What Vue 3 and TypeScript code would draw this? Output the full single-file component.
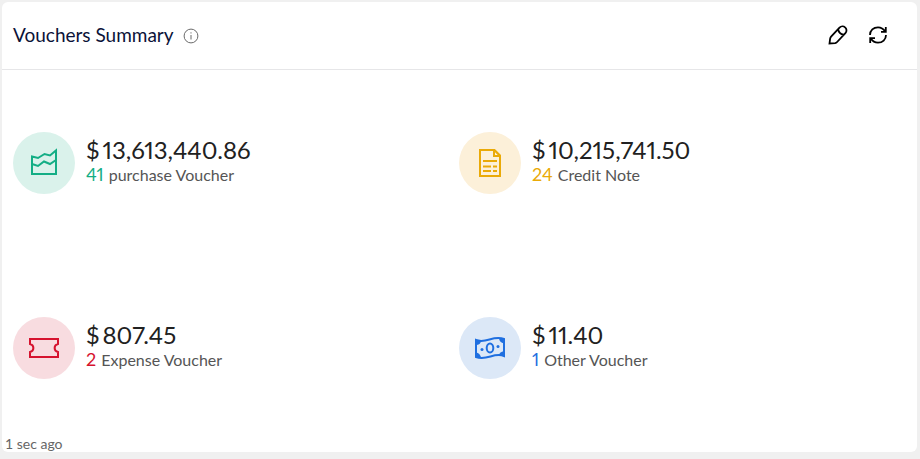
<script setup lang="ts">
import { ref } from 'vue'

type Kind = 'purchase' | 'credit' | 'expense' | 'other'

interface VoucherStat {
  kind: Kind
  amount: string
  count: number
  label: string
}

const stats = ref<VoucherStat[]>([
  { kind: 'purchase', amount: '13,613,440.86', count: 41, label: 'purchase Voucher' },
  { kind: 'credit', amount: '10,215,741.50', count: 24, label: 'Credit Note' },
  { kind: 'expense', amount: '807.45', count: 2, label: 'Expense Voucher' },
  { kind: 'other', amount: '11.40', count: 1, label: 'Other Voucher' },
])
</script>

<template>
  <section class="card">
    <header class="head">
      <h2 class="title">Vouchers Summary</h2>
      <svg class="info" viewBox="0 0 16 16" aria-hidden="true">
        <circle cx="8" cy="8" r="6.9" />
        <path d="M8 7v4.5M8 4.3v1.2" />
      </svg>
      <div class="actions">
        <button type="button" class="action" aria-label="Edit">
          <svg viewBox="0 0 20 20" aria-hidden="true">
            <path d="M1.500 18.500 2.100 13.800Q2.300 12.600 3.100 11.700L11.500 2.700C13.200 .9 15.600 1 17.100 2.400C18.800 3.900 19 6.400 17.400 8.100L9.100 17Q8.300 17.900 7.100 18.100ZM10.200 4.200C10.500 7.100 12.700 9.300 15.800 9.700" />
          </svg>
        </button>
        <button type="button" class="action" aria-label="Refresh">
          <svg viewBox="0 0 20 20" aria-hidden="true">
            <path d="M2 10C2 5.500 5.500 2.300 10 2.300C13 2.300 15.500 3.800 17 6.500M17.800 2V6.800H13M18 10C18 14.500 14.500 17.700 10 17.700C7 17.700 4.500 16.200 3 13.500M2.200 18V13.200H7" />
          </svg>
        </button>
      </div>
    </header>

    <div class="grid">
      <article v-for="item in stats" :key="item.kind" class="stat" :class="item.kind">
        <div class="badge">
          <svg viewBox="0 0 32 32" aria-hidden="true">
            <path v-if="item.kind === 'purchase'" d="M4 9.500 10 11 16.500 7 22 8.500 28 3.500V27H4ZM4 17 10 19 16 14.500 22 17 28 13" />
            <template v-else-if="item.kind === 'credit'">
              <path d="M6 3H20.500L26 8.500V29H6Z" />
              <path class="solid" d="M19 3H21L26 8V10H19ZM21 5V8H24Z" fill-rule="evenodd" />
              <path d="M9 14H23M9 19.500H17M19 19.500H23M9 24H17M19 24H23" />
            </template>
            <path v-else-if="item.kind === 'expense'" d="M2 7H30V12C25.500 13 25.500 19 30 20V25H2V20C6.500 19 6.500 13 2 12Z" />
            <template v-else>
              <path d="M2 8C12 12 19 3 30 7V24C20 20 13 29 2 25Z" />
              <ellipse cx="16" cy="16" rx="3.300" ry="4.500" />
              <path class="solid" d="M2 8L7 9Q6.500 13 2 13ZM30 7 25 6.500Q25.500 10.500 30 11.500ZM2 25V20.500Q6 21 7 25.500ZM30 24V19Q25.500 20 25 23Z" />
              <circle class="solid" cx="8" cy="17.500" r="1.500" />
              <circle class="solid" cx="24" cy="14.500" r="1.500" />
            </template>
          </svg>
        </div>
        <div class="text">
          <div class="amount"><span>$</span><span>{{ item.amount }}</span></div>
          <div class="line"><span class="count">{{ item.count }}</span><span>{{ item.label }}</span></div>
        </div>
      </article>
    </div>

    <footer class="updated">1 sec ago</footer>
  </section>
</template>

<style>
body {
  background: #f0f0f0;
}
</style>

<style scoped>
.card {
  margin: 2px 3px 0 2px;
  background: #fff;
  border-radius: 6px;
  font-family: Lato, "Liberation Sans", sans-serif;
}

.head {
  display: flex;
  align-items: center;
  height: 65px;
  padding: 0 29px 2px 11px;
  border-bottom: 1px solid #e6e6e8;
}

.title {
  margin: 0;
  font-size: 19px;
  font-weight: 400;
  line-height: 24px;
  color: #0b1238;
}

svg {
  display: block;
  fill: none;
  stroke: currentColor;
}

.info {
  width: 16px;
  height: 16px;
  margin: 2px 0 0 9px;
  color: #6b6b6b;
}

.actions {
  display: flex;
  gap: 20px;
  margin-left: auto;
}

.action {
  padding: 0;
  border: 0;
  background: none;
  color: #000;
  cursor: pointer;
}

.action svg {
  width: 20px;
  height: 20px;
  stroke-width: 1.8;
}

.grid {
  display: grid;
  grid-template-columns: repeat(2, minmax(0, 1fr));
  grid-auto-rows: 185px;
  padding: 0 12px 0 11px;
}

.stat {
  display: flex;
  align-items: center;
  gap: 11px;
}

.badge {
  display: flex;
  flex: none;
  align-items: center;
  justify-content: center;
  width: 62px;
  height: 62px;
  border-radius: 50%;
}

.badge svg {
  width: 32px;
  height: 32px;
  stroke-width: 2;
}

.solid {
  fill: currentColor;
  stroke: none;
}

.text {
  padding-bottom: 2px;
  font-variant-numeric: proportional-nums;
}

.amount {
  display: flex;
  gap: 3px;
  font-size: 24px;
  line-height: 26px;
  color: #212121;
}

.line {
  display: flex;
  align-items: baseline;
  gap: 5px;
  font-size: 16px;
  line-height: 22px;
  color: #555;
}

.count {
  font-size: 18px;
}

.purchase .badge { background: #daf2eb; }
.purchase .badge,
.purchase .count { color: #13ae85; }

.credit .badge { background: #fcf0d9; }
.credit .badge,
.credit .count { color: #eaaa08; }

.expense .badge { background: #f8dce0; }
.expense .badge,
.expense .count { color: #d6132f; }

.other .badge { background: #dce8f7; }
.other .badge,
.other .count { color: #1f6fe0; }

.updated {
  margin-top: -4px;
  padding-left: 3px;
  font-size: 14px;
  line-height: 16px;
  color: #666;
}
</style>
